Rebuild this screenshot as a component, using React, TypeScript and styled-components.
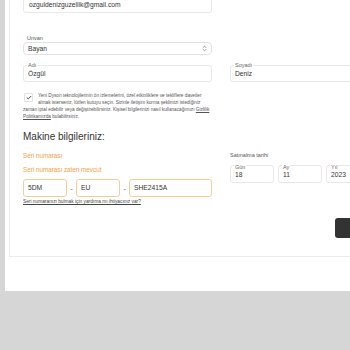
import React from 'react';
import styled, { createGlobalStyle } from 'styled-components';
import { ChevronsUpDown } from 'lucide-react';

const GlobalStyle = createGlobalStyle`
  html, body {
    margin: 0;
    padding: 0;
    background: #d6d6d6;
    overflow: hidden;
  }
  body {
    font-family: 'Liberation Sans', Arial, sans-serif;
    color: #333;
  }
`;

const Page = styled.div`
  width: 350px;
  height: 350px;
  overflow: hidden;
`;

const Panel = styled.div`
  margin-left: 5px;
  padding: 0 0 34px 4px;
  background: #fff;
`;

const Card = styled.div`
  border-left: 1px solid #ececec;
  border-bottom: 1px solid #ececec;
  padding: 0 0 18px 13px;
  overflow: hidden;
`;

const Form = styled.div`
  width: 396px;
`;

const TwoCols = styled.div<{ $top?: number }>`
  display: grid;
  grid-template-columns: 189px 189px;
  column-gap: 18px;
  align-items: start;
  margin-top: ${(p) => p.$top ?? 0}px;
`;

const FieldBox = styled.div<{ $height?: number; $warn?: boolean; $top?: number; $pad?: number }>`
  position: relative;
  box-sizing: border-box;
  height: ${(p) => p.$height ?? 17}px;
  margin-top: ${(p) => p.$top ?? 0}px;
  border: 1px solid ${(p) => (p.$warn ? '#f6cd95' : '#e8e8e8')};
  border-radius: 3px;
  display: flex;
  align-items: center;
  padding: 0 ${(p) => p.$pad ?? 4}px;
  background: #fff;
`;

const FloatLabel = styled.span<{ $offset: number }>`
  position: absolute;
  left: 3px;
  top: ${(p) => p.$offset}px;
  padding: 0 1px;
  background: #fff;
  font-size: 5.5px;
  line-height: 6px;
  color: #666;
`;

const Value = styled.span<{ $shift?: number }>`
  font-size: 6.7px;
  line-height: 8px;
  color: #333;
  margin-top: ${(p) => p.$shift ?? 0}px;
`;

const SmallLabel = styled.div<{ $top?: number; $indent?: number }>`
  font-size: 5.5px;
  line-height: 7px;
  color: #555;
  margin-top: ${(p) => p.$top ?? 0}px;
  padding-left: ${(p) => p.$indent ?? 0}px;
`;

const SelectBox = styled.div`
  box-sizing: border-box;
  width: 189px;
  height: 13px;
  margin-top: 0.5px;
  border: 1px solid #e2e2e2;
  border-radius: 4px;
  display: flex;
  align-items: center;
  justify-content: space-between;
  padding: 0 3px 0 4px;
`;

const Consent = styled.div`
  width: 189px;
  margin-top: 9.5px;
  font-size: 4.7px;
  line-height: 7px;
  color: #555;
`;

const CheckBox = styled.span`
  float: left;
  box-sizing: border-box;
  width: 9px;
  height: 9px;
  margin: 1.5px 5px 0 1px;
  border: 1px solid #e0e0e0;
  border-radius: 1px;
  display: flex;
  align-items: center;
  justify-content: center;
`;

const PolicyLink = styled.a`
  color: #555;
  text-decoration: underline;
`;

const Heading = styled.h2`
  margin: 11.5px 0 0;
  font-size: 10px;
  line-height: 12px;
  font-weight: 400;
  color: #333;
`;

const Warn = styled.div<{ $top?: number }>`
  font-size: 6.3px;
  line-height: 7px;
  color: #f2a443;
  margin-top: ${(p) => p.$top ?? 0}px;
`;

const SerialRow = styled.div`
  display: flex;
  align-items: center;
  margin-top: 6.5px;
`;

const Dash = styled.span`
  width: 9px;
  text-align: center;
  font-size: 6.7px;
  color: #555;
`;

const HelpLink = styled.a`
  display: block;
  margin-top: 2px;
  font-size: 4.8px;
  line-height: 6px;
  color: #444;
  text-decoration: underline;
`;

const DateRow = styled.div`
  display: grid;
  grid-template-columns: 44px 44px 44px;
  column-gap: 4px;
  margin-top: 6.5px;
`;

const ButtonRow = styled.div`
  display: flex;
  justify-content: flex-end;
  margin-top: 13px;
`;

const DarkButton = styled.button`
  width: 84px;
  height: 20px;
  border: none;
  border-radius: 3px;
  background: #333;
`;

const CheckMark = () => (
  <svg width="6" height="5" viewBox="0 0 6 5">
    <path d="M0.8 2.6 L2.3 3.9 L5.2 1" fill="none" stroke="#333" strokeWidth="0.9" />
  </svg>
);

const TextField = ({ label, value, offset = -4 }: { label: string; value: string; offset?: number }) => (
  <FieldBox>
    <FloatLabel $offset={offset}>{label}</FloatLabel>
    <Value $shift={1}>{value}</Value>
  </FieldBox>
);

const DateField = ({ label, value }: { label: string; value: string }) => (
  <FieldBox $height={18}>
    <FloatLabel $offset={-2}>{label}</FloatLabel>
    <Value $shift={1}>{value}</Value>
  </FieldBox>
);

const App = () => {
  return (
    <Page>
      <GlobalStyle />
      <Panel>
        <Card>
          <Form>
            <TwoCols>
              <FieldBox $top={-4} $pad={5}>
                <Value>ozguldenizguzellik@gmail.com</Value>
              </FieldBox>
            </TwoCols>

            <SmallLabel $top={21.5} $indent={4}>Unvan</SmallLabel>
            <SelectBox>
              <Value>Bayan</Value>
              <ChevronsUpDown size={7} strokeWidth={2} color="#555" />
            </SelectBox>

            <TwoCols $top={10}>
              <TextField label="Adı" value="Özgül" />
              <TextField label="Soyadı" value="Deniz" />
            </TwoCols>

            <Consent>
              <CheckBox>
                <CheckMark />
              </CheckBox>
              Yeni Dyson teknolojilerinin ön izlemelerini, özel etkinliklere ve tekliflere davetler almak
              isterseniz, lütfen kutuyu seçin. Sizinle iletişim kurma şeklimizi istediğiniz zaman iptal
              edebilir veya değiştirebilirsiniz. Kişisel bilgilerinizi nasıl kullanacağımızı{' '}
              <PolicyLink>Gizlilik</PolicyLink> <PolicyLink>Politikamızda</PolicyLink> bulabilirsiniz.
            </Consent>

            <Heading>Makine bilgileriniz:</Heading>

            <TwoCols $top={8.5}>
              <div>
                <Warn>Seri numarası</Warn>
                <Warn $top={7}>Seri numarası zaten mevcut</Warn>
                <SerialRow>
                  <FieldBox $height={18} $warn style={{ width: 44 }}>
                    <Value>5DM</Value>
                  </FieldBox>
                  <Dash>-</Dash>
                  <FieldBox $height={18} $warn style={{ width: 44 }}>
                    <Value>EU</Value>
                  </FieldBox>
                  <Dash>-</Dash>
                  <FieldBox $height={18} $warn style={{ flex: 1 }}>
                    <Value>SHE2415A</Value>
                  </FieldBox>
                </SerialRow>
                <HelpLink>Seri numaranızı bulmak için yardıma mı ihtiyacınız var?</HelpLink>
              </div>
              <div>
                <SmallLabel>Satınalma tarihi</SmallLabel>
                <DateRow>
                  <DateField label="Gün" value="18" />
                  <DateField label="Ay" value="11" />
                  <DateField label="Yıl" value="2023" />
                </DateRow>
              </div>
            </TwoCols>

            <ButtonRow>
              <DarkButton />
            </ButtonRow>
          </Form>
        </Card>
      </Panel>
    </Page>
  );
};

export default App;
